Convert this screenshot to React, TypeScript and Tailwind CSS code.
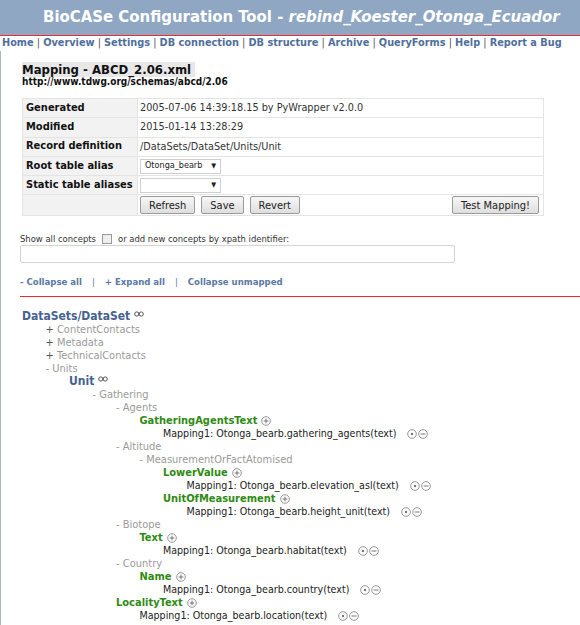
import type { ReactNode } from "react"

const font = "font-['DejaVu_Sans_Condensed','DejaVu_Sans',sans-serif]"

const navLinks = [
  "Home",
  "Overview",
  "Settings",
  "DB connection",
  "DB structure",
  "Archive",
  "QueryForms",
  "Help",
  "Report a Bug",
]

type Row =
  | { kind: "root"; label: string; depth: number }
  | { kind: "group"; label: string; depth: number; sign: "+" | "-" }
  | { kind: "concept"; label: string; depth: number }
  | { kind: "mapping"; label: string; depth: number }

const tree: Row[] = [
  { kind: "root", label: "DataSets/DataSet", depth: 0 },
  { kind: "group", label: "ContentContacts", depth: 1, sign: "+" },
  { kind: "group", label: "Metadata", depth: 1, sign: "+" },
  { kind: "group", label: "TechnicalContacts", depth: 1, sign: "+" },
  { kind: "group", label: "Units", depth: 1, sign: "-" },
  { kind: "root", label: "Unit", depth: 2 },
  { kind: "group", label: "Gathering", depth: 3, sign: "-" },
  { kind: "group", label: "Agents", depth: 4, sign: "-" },
  { kind: "concept", label: "GatheringAgentsText", depth: 5 },
  { kind: "mapping", label: "Mapping1: Otonga_bearb.gathering_agents(text)", depth: 6 },
  { kind: "group", label: "Altitude", depth: 4, sign: "-" },
  { kind: "group", label: "MeasurementOrFactAtomised", depth: 5, sign: "-" },
  { kind: "concept", label: "LowerValue", depth: 6 },
  { kind: "mapping", label: "Mapping1: Otonga_bearb.elevation_asl(text)", depth: 7 },
  { kind: "concept", label: "UnitOfMeasurement", depth: 6 },
  { kind: "mapping", label: "Mapping1: Otonga_bearb.height_unit(text)", depth: 7 },
  { kind: "group", label: "Biotope", depth: 4, sign: "-" },
  { kind: "concept", label: "Text", depth: 5 },
  { kind: "mapping", label: "Mapping1: Otonga_bearb.habitat(text)", depth: 6 },
  { kind: "group", label: "Country", depth: 4, sign: "-" },
  { kind: "concept", label: "Name", depth: 5 },
  { kind: "mapping", label: "Mapping1: Otonga_bearb.country(text)", depth: 6 },
  { kind: "concept", label: "LocalityText", depth: 4 },
  { kind: "mapping", label: "Mapping1: Otonga_bearb.location(text)", depth: 5 },
]

function CircleIcon({ mark }: { mark: "plus" | "minus" | "dot" }) {
  return (
    <svg width="10" height="10" viewBox="0 0 10 10" className="inline-block">
      <circle cx="5" cy="5" r="4.3" fill="none" stroke="#8a8a8a" strokeWidth="0.9" />
      {mark === "dot" && <circle cx="5" cy="5" r="1.2" fill="#777" />}
      {mark !== "dot" && <line x1="2.6" y1="5" x2="7.4" y2="5" stroke="#777" strokeWidth="1" />}
      {mark === "plus" && <line x1="5" y1="2.6" x2="5" y2="7.4" stroke="#777" strokeWidth="1" />}
    </svg>
  )
}

// small "oo" mark beside the repeatable elements
function Repeatable() {
  return (
    <svg width="10" height="6" viewBox="0 0 10 6" className="-mt-[5px] ml-[4px]">
      <circle cx="2.8" cy="3" r="2.1" fill="none" stroke="#444" strokeWidth="0.9" />
      <circle cx="7.2" cy="3" r="2.1" fill="none" stroke="#444" strokeWidth="0.9" />
    </svg>
  )
}

function LabelCell({ children }: { children: ReactNode }) {
  return (
    <td className="h-[19.3px] w-[115px] border border-[#e4e4e4] bg-[#f2f2f2] px-[3px] py-0 text-[11px] font-bold text-[#111]">
      {children}
    </td>
  )
}

function ValueCell({ children }: { children: ReactNode }) {
  return <td className="border border-[#e4e4e4] bg-white px-[2px] py-0 text-[10.8px] text-[#333]">{children}</td>
}

function Select({ value }: { value: string }) {
  return (
    <div className="flex h-[15px] w-[81px] items-center justify-between border border-[#cfcfcf] bg-white pl-[4px] pr-[4px] text-[9px] text-[#222]">
      <span>{value}</span>
      <span className="text-[7px] leading-none">▼</span>
    </div>
  )
}

function Button({ children, className = "" }: { children: ReactNode; className?: string }) {
  return (
    <button
      className={`h-[18px] rounded-[2px] border border-[#9a9a9a] bg-[linear-gradient(#f7f7f7,#dedede)] px-[8px] text-[11px] leading-none text-[#222] ${className}`}
    >
      {children}
    </button>
  )
}

function TreeRow({ row }: { row: Row }) {
  const pad = { paddingLeft: 21 + row.depth * 23.5 }
  if (row.kind === "root") {
    return (
      <div style={pad} className="flex h-[13px] items-center whitespace-nowrap text-[12px] font-bold leading-[13px] text-[#46628f]">
        {row.label}
        <Repeatable />
      </div>
    )
  }
  if (row.kind === "group") {
    return (
      <div style={pad} className="h-[13px] whitespace-nowrap text-[11px] leading-[13px] text-[#9a9a9a]">
        <span className={row.sign === "+" ? "text-[#555]" : ""}>{row.sign}</span> {row.label}
      </div>
    )
  }
  if (row.kind === "concept") {
    return (
      <div style={pad} className="flex h-[13px] items-center gap-[4px] whitespace-nowrap text-[11px] font-bold leading-[13px] text-[#2f8a14]">
        {row.label}
        <CircleIcon mark="plus" />
      </div>
    )
  }
  return (
    <div style={pad} className="flex h-[13px] items-center whitespace-nowrap text-[10.6px] leading-[13px] text-[#222]">
      {row.label}
      <span className="ml-[11px] flex gap-[1px]">
        <CircleIcon mark="dot" />
        <CircleIcon mark="minus" />
      </span>
    </div>
  )
}

export default function App() {
  return (
    <div className={`${font} min-h-[625px] w-[580px] overflow-hidden bg-white`}>
      <header className="flex h-[36px] items-center border-b border-[#e83030] bg-[#8fa7c3] pl-[43px]">
        <h1 className="whitespace-nowrap text-[16.6px] font-bold text-white">
          BioCASe Configuration Tool - <i>rebind_Koester_Otonga_Ecuador</i>
        </h1>
      </header>

      <nav className="flex h-[15px] items-center pl-[2px] text-[10.85px] font-bold text-[#4f6f9c]">
        {navLinks.map((link, i) => (
          <span key={link} className="whitespace-pre">
            {i > 0 && <span className="font-normal text-[#555]"> | </span>}
            {link}
          </span>
        ))}
      </nav>

      <main className="border-l border-[#a9b6c8] pb-[4px]">
        <div className="pl-[19px] pt-[11px]">
          <div className="ml-[2px] w-fit bg-[#e8e8e8] pr-[4px] text-[13px] font-bold leading-[15px] text-[#111]">
            Mapping - ABCD_2.06.xml
          </div>
          <div className="ml-[2px] text-[10px] font-bold leading-[10px] text-[#111]">http://www.tdwg.org/schemas/abcd/2.06</div>

          <table className="ml-[2px] mt-[11px] w-[522px] border-collapse border border-[#d8d8d8]">
            <tbody>
              <tr>
                <LabelCell>Generated</LabelCell>
                <ValueCell>2005-07-06 14:39:18.15 by PyWrapper v2.0.0</ValueCell>
              </tr>
              <tr>
                <LabelCell>Modified</LabelCell>
                <ValueCell>2015-01-14 13:28:29</ValueCell>
              </tr>
              <tr>
                <LabelCell>Record definition</LabelCell>
                <ValueCell>/DataSets/DataSet/Units/Unit</ValueCell>
              </tr>
              <tr>
                <LabelCell>Root table alias</LabelCell>
                <ValueCell>
                  <Select value="Otonga_bearb" />
                </ValueCell>
              </tr>
              <tr>
                <LabelCell>Static table aliases</LabelCell>
                <ValueCell>
                  <Select value="" />
                </ValueCell>
              </tr>
              <tr>
                <LabelCell>{""}</LabelCell>
                <ValueCell>
                  <div className="flex h-[20px] items-center gap-[6px]">
                    <Button>Refresh</Button>
                    <Button>Save</Button>
                    <Button>Revert</Button>
                    <Button className="ml-auto mr-[2px]">Test Mapping!</Button>
                  </div>
                </ValueCell>
              </tr>
            </tbody>
          </table>

          <div className="mt-[17px] flex h-[12px] items-center text-[9.4px] text-[#333]">
            Show all concepts
            <span className="mx-[6px] inline-block h-[10px] w-[10px] border border-[#999] bg-[#eee]" />
            or add new concepts by xpath identifier:
          </div>
          <div className="h-[18px] w-[435px] rounded-[2px] border border-[#d4d4d4] bg-white" />

          <div className="mt-[13px] flex h-[12px] items-center text-[9.5px] font-bold text-[#5a78a3]">
            <span>- Collapse all</span>
            <span className="mx-[10px] font-normal">|</span>
            <span>+ Expand all</span>
            <span className="mx-[10px] font-normal">|</span>
            <span>Collapse unmapped</span>
          </div>
        </div>

        <div className="ml-[19px] mt-[8px] border-t border-[#f02a2a]" />

        <div className="pt-[13px]">
          {tree.map((row, i) => (
            <TreeRow key={i} row={row} />
          ))}
        </div>
      </main>
    </div>
  )
}
